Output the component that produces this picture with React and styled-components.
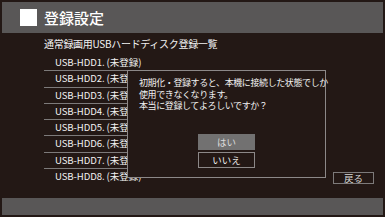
import React from 'react';
import styled, { createGlobalStyle } from 'styled-components';

const GlobalStyle = createGlobalStyle`
  html, body {
    margin: 0;
    padding: 0;
    background: #231815;
  }
  body {
    font-family: "Noto Sans CJK JP", "Noto Sans", sans-serif;
  }
`;

const StyledScreen = styled.div`
  display: flex;
  flex-direction: column;
  box-sizing: border-box;
  width: 385px;
  height: 217px;
  padding: 2px;
  background-color: #231815;
  color: #f2f2f2;
  overflow: hidden;
`;

const StyledHeader = styled.header`
  display: flex;
  align-items: center;
  gap: 7px;
  height: 31px;
  padding-left: 18px;
  background-color: #595757;
`;

const StyledIcon = styled.div`
  width: 17px;
  height: 17px;
  background-color: #ffffff;
`;

const StyledTitle = styled.h1`
  margin: 0;
  font-size: 15px;
  font-weight: 500;
  line-height: 1;
  color: #ffffff;
`;

const StyledContent = styled.main`
  position: relative;
  flex: 1;
  display: flex;
  justify-content: space-between;
`;

const StyledListColumn = styled.section`
  display: flex;
  flex-direction: column;
  padding: 4px 0 0 42px;
`;

const StyledSubtitle = styled.h2`
  margin: 0;
  font-size: 10px;
  font-weight: 400;
  line-height: 14px;
  letter-spacing: -0.3px;
`;

const StyledList = styled.ul`
  width: 200px;
  margin: 4px 0 0;
  padding: 0;
  list-style: none;
`;

const StyledRow = styled.li`
  height: 15.3px;
  padding-left: 11px;
  font-size: 9.6px;
  line-height: 15.3px;
  letter-spacing: -0.1px;
  border-bottom: 1px solid ${({ $last }) => ($last ? 'transparent' : '#7d7a7a')};
`;

const StyledBackButton = styled.button`
  align-self: flex-end;
  box-sizing: border-box;
  width: 41px;
  height: 12px;
  margin: 0 9px 13px 0;
  padding: 0;
  border: 1px solid #7d7a7a;
  background: transparent;
  color: #d8d8d8;
  font-family: inherit;
  font-size: 9.5px;
  line-height: 10px;
`;

const StyledDialog = styled.div`
  position: absolute;
  left: 125px;
  top: 37px;
  box-sizing: border-box;
  width: 199px;
  height: 108px;
  display: flex;
  flex-direction: column;
  justify-content: space-between;
  padding: 6px 0 9px 11px;
  border: 1px solid #8c8888;
  background-color: #231815;
`;

const StyledMessage = styled.p`
  margin: 0;
  font-size: 9px;
  line-height: 11.7px;
  letter-spacing: -0.4px;
  color: #f0f0f0;
  white-space: nowrap;
`;

const StyledButtons = styled.div`
  display: flex;
  flex-direction: column;
  align-items: center;
  gap: 2px;
  margin-left: -11px;
`;

const StyledChoice = styled.button`
  box-sizing: border-box;
  width: 57px;
  height: 16px;
  padding: 0;
  border: 1px solid ${({ $selected }) => ($selected ? '#727171' : '#8c8888')};
  background-color: ${({ $selected }) => ($selected ? '#727171' : 'transparent')};
  color: ${({ $selected }) => ($selected ? '#dddddd' : '#f0f0f0')};
  font-family: inherit;
  font-size: 9.5px;
  line-height: 14px;
`;

const StyledFooter = styled.footer`
  height: 17px;
  margin-top: 1px;
  background-color: #595757;
`;

const disks = [1, 2, 3, 4, 5, 6, 7, 8];

const App = () => (
  <>
    <GlobalStyle />
    <StyledScreen>
      <StyledHeader>
        <StyledIcon />
        <StyledTitle>登録設定</StyledTitle>
      </StyledHeader>
      <StyledContent>
        <StyledListColumn>
          <StyledSubtitle>通常録画用USBハードディスク登録一覧</StyledSubtitle>
          <StyledList>
            {disks.map(n => (
              <StyledRow key={n} $last={n === disks.length}>
                USB-HDD{n}. (未登録)
              </StyledRow>
            ))}
          </StyledList>
        </StyledListColumn>
        <StyledBackButton type="button">戻る</StyledBackButton>
        <StyledDialog>
          <StyledMessage>
            初期化・登録すると、本機に接続した状態でしか
            <br />
            使用できなくなります。
            <br />
            本当に登録してよろしいですか？
          </StyledMessage>
          <StyledButtons>
            <StyledChoice type="button" $selected>
              はい
            </StyledChoice>
            <StyledChoice type="button">いいえ</StyledChoice>
          </StyledButtons>
        </StyledDialog>
      </StyledContent>
      <StyledFooter />
    </StyledScreen>
  </>
);

export default App;
